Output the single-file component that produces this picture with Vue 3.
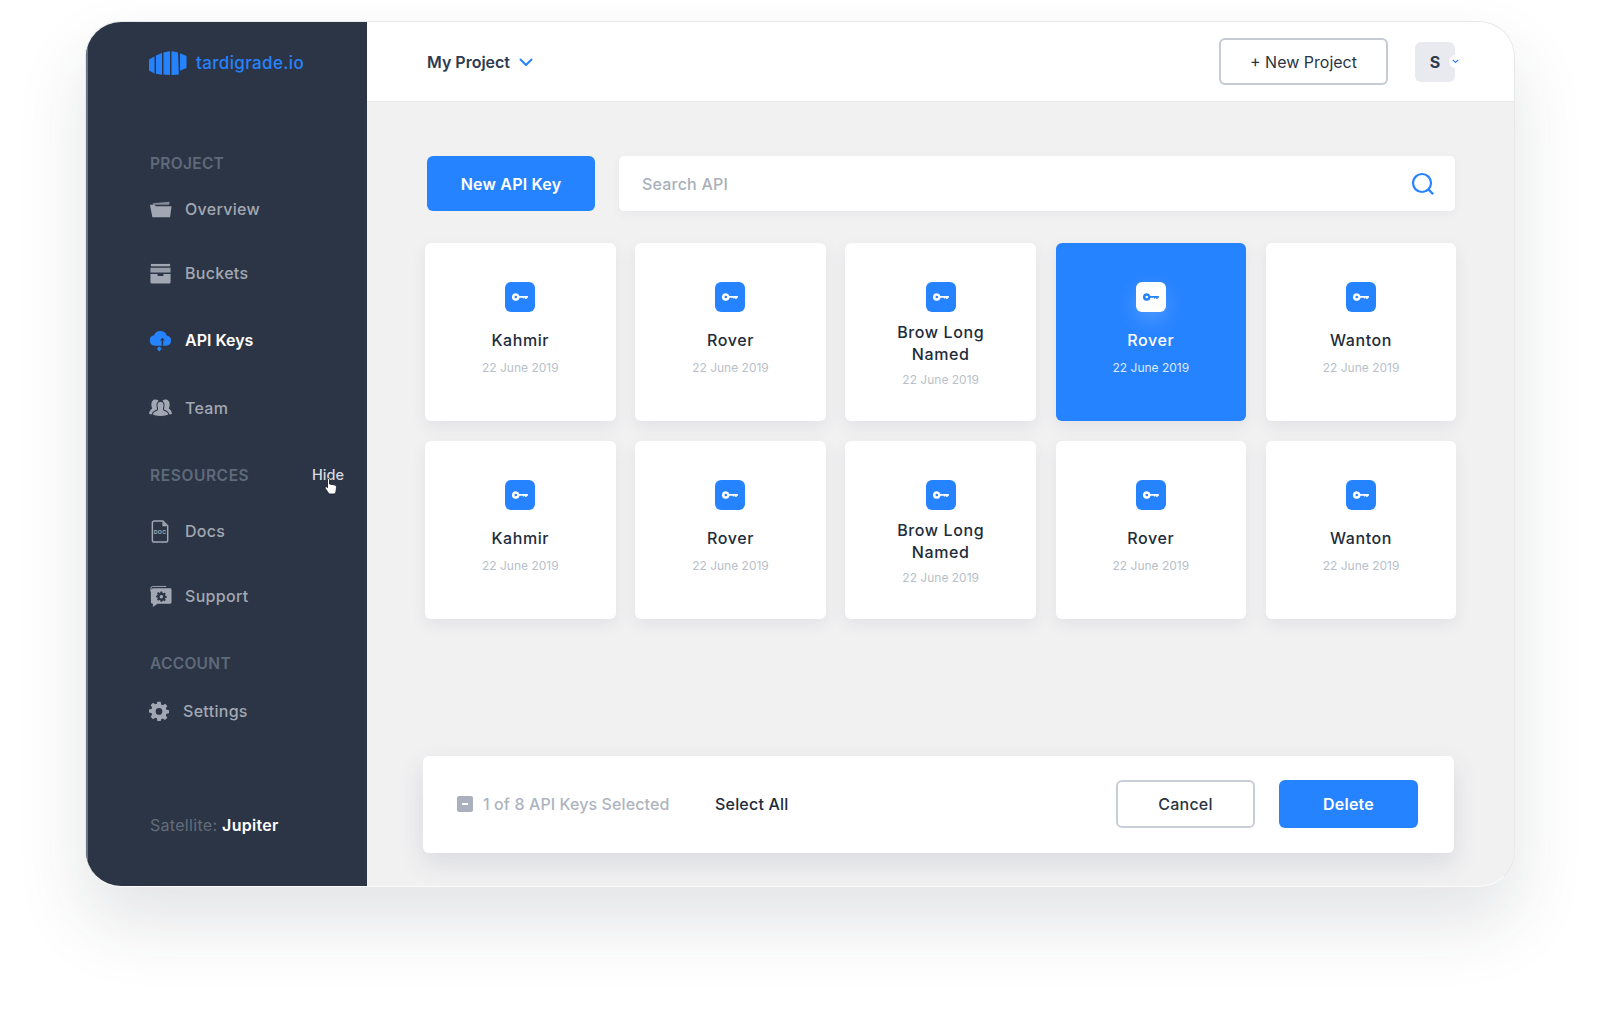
<template>
  <div class="page">
    <div class="window">
      <aside class="sidebar">
        <div class="logo">
          <svg class="logo-mark" width="38" height="24" viewBox="0 0 38 24">
            <path d="M0 8.500 5.500 5.500v17L0 19.500z" />
            <path d="M7 4.500 13 2v21.800L7 22.800z" />
            <path d="M14.500 1.500Q17.500.5 21 .3V24q-3.500-.1-6.500-.5z" />
            <path d="M22.500.3q3.500.2 6.500 1.200l.8 22q-3 .4-7.300.5z" />
            <path d="M31 2.300l6.500 2.700v12l-6.500 2.800z" />
          </svg>
          <span>tardigrade.io</span>
        </div>

        <div class="label first">PROJECT</div>
        <div v-for="item in projectItems" :key="item.name" class="item" :class="[item.cls, { active: item.active }]">
          <svg v-if="item.icon === 'folder'" class="icon" viewBox="0 0 24 24">
            <path d="M4 5.500 21.500 4 21 7H4z" opacity=".75" />
            <path d="M1 7h5l1 1.500h16.500L22 20H3.500z" />
          </svg>
          <svg v-else-if="item.icon === 'box'" class="icon" viewBox="0 0 24 24">
            <path d="M2 2h20v2.500H2z" />
            <path d="M1.500 6h21v5h-21z" opacity=".9" />
            <path d="M1.500 12.500h7.500v2h6v-2h7.500V21a1.500 1.500 0 0 1-1.500 1.500H3A1.500 1.500 0 0 1 1.500 21z" />
          </svg>
          <svg v-else-if="item.icon === 'cloud'" class="icon blue" viewBox="0 0 24 24">
            <path d="M6 17.500A5.500 5.500 0 0 1 5.300 6.600 7 7 0 0 1 18.500 6.800a5.400 5.400 0 0 1-.5 10.700z" />
            <path d="M9.500 18.500h2.500v1.700h1.700L10.750 23.500 7.800 20.200h1.700z" />
            <path d="M14 9 11.500 12h1.700v5.500h1.600V12h1.700z" fill="#2c3545" />
          </svg>
          <svg v-else class="icon" viewBox="0 0 24 24">
            <path d="M6.500 2.500a4.500 4.500 0 0 1 3.500 1.500C8.400 6 8.400 10 9.800 12.500c-2 .8-4.800 2-5.300 5.500H.8c-1.200 0-.8-3.800 2.500-6C1.500 8 2.500 2.500 6.500 2.500z" />
            <path d="M17.500 2.500a4.500 4.500 0 0 0-3.500 1.500c1.600 2 1.600 6 .2 8.500 2 .8 4.800 2 5.300 5.500h3.700c1.200 0 .8-3.800-2.500-6C22.500 8 21.500 2.500 17.500 2.500z" />
            <path d="M12 4.500c3.500 0 4.500 3.500 3.300 6.700-.5 1.300-.8 2 .5 2.600 2.200.8 4.700 1.900 4.700 4.200 0 1-3.500 2.500-8.500 2.500s-8.500-1.500-8.500-2.500c0-2.300 2.500-3.400 4.700-4.200 1.300-.6 1-1.300.5-2.600C7.500 8 8.500 4.500 12 4.500z" stroke="#2c3545" stroke-width="1.100" />
          </svg>
          <span>{{ item.name }}</span>
        </div>

        <div class="label resources">
          <span>RESOURCES</span>
          <span class="hide">Hide</span>
          <svg class="hand" width="14" height="17" viewBox="0 0 14 17">
            <path d="M3.500 1.500c0-1.300 2-1.300 2 0V6l4.500.8c1.500.3 2.500 1 2.500 2.500L12 13.500c-.2 1-.8 2-1.500 2.500H5L1.300 10.500C.5 9.300 1.800 8 3 9l.5.7z" fill="#fff" stroke="#1b2230" stroke-width=".9" />
          </svg>
        </div>
        <div v-for="item in resourceItems" :key="item.name" class="item" :class="item.cls">
          <svg v-if="item.icon === 'doc'" class="icon" viewBox="0 0 24 24">
            <path d="M5.500 1h9l5 5v15a2 2 0 0 1-2 2h-12a2 2 0 0 1-2-2V3a2 2 0 0 1 2-2z" fill="none" stroke="currentColor" stroke-width="1.500" />
            <path d="M14 1.500V6.500h5z" />
            <text x="11.500" y="15" text-anchor="middle" font-size="5.500" font-weight="700" font-family="Inter, sans-serif">DOC</text>
          </svg>
          <svg v-else class="icon" viewBox="0 0 24 24">
            <path d="M2 7V3.500A2 2 0 0 1 4 1.500h14" fill="none" stroke="currentColor" stroke-width="1" />
            <path d="M5 3.500h17a1.500 1.500 0 0 1 1.500 1.500v13a1.500 1.500 0 0 1-1.500 1.500H9l-5 3.500.2-3.500H3.500A1.500 1.500 0 0 1 2 18V6a2.500 2.500 0 0 1 3-2.500z" />
            <g transform="translate(7.400 6.400) scale(.46)" fill="#2c3545">
              <path fill-rule="evenodd" d="M10 1h4l.6 3.200 1.900.8 2.700-1.800 2.800 2.800-1.800 2.700.8 1.900L24 11.200v3.600l-3 .6-.8 1.900 1.800 2.700-2.800 2.800-2.700-1.800-1.900.8L14 24h-4l-.6-3.200-1.900-.8-2.700 1.800L2 19l1.800-2.700-.8-1.900L0 13.800v-3.600l3-.6.8-1.900L2 5l2.800-2.800 2.700 1.800 1.900-.8zM12 8.500a4 4 0 1 0 0 8 4 4 0 0 0 0-8z" />
            </g>
          </svg>
          <span>{{ item.name }}</span>
        </div>

        <div class="label account">ACCOUNT</div>
        <div class="item settings">
          <svg class="icon gear" viewBox="0 0 24 24">
            <path fill-rule="evenodd" d="M10 1h4l.6 3.200 1.900.8 2.700-1.800 2.800 2.800-1.800 2.700.8 1.900L24 11.200v3.600l-3 .6-.8 1.900 1.800 2.700-2.800 2.800-2.700-1.800-1.900.8L14 24h-4l-.6-3.200-1.900-.8-2.700 1.800L2 19l1.800-2.700-.8-1.900L0 13.800v-3.600l3-.6.8-1.900L2 5l2.800-2.800 2.700 1.800 1.900-.8zM12 8.500a4 4 0 1 0 0 8 4 4 0 0 0 0-8z" />
          </svg>
          <span>Settings</span>
        </div>

        <div class="satellite">Satellite: <b>Jupiter</b></div>
      </aside>

      <div class="main">
        <header class="topbar">
          <div class="project">
            <span>My Project</span>
            <svg width="14" height="9" viewBox="0 0 14 9">
              <path d="M1.500 1.500 7 7l5.500-5.500" fill="none" stroke="#2683ff" stroke-width="2" stroke-linecap="round" stroke-linejoin="round" />
            </svg>
          </div>
          <button class="new-project">+ New Project</button>
          <div class="avatar">
            S
            <span class="avatar-chevron">
              <svg width="7" height="5" viewBox="0 0 7 5">
                <path d="M.8.8 3.500 3.500 6.200.8" fill="none" stroke="#2683ff" stroke-width="1.100" />
              </svg>
            </span>
          </div>
        </header>

        <div class="content">
          <div class="toolbar">
            <button class="btn primary new-key">New API Key</button>
            <div class="search">
              <span>Search API</span>
              <svg width="24" height="24" viewBox="0 0 24 24">
                <circle cx="11" cy="11" r="9" fill="none" stroke="#2683ff" stroke-width="2.200" />
                <path d="M18 18l3.500 3.500" stroke="#2683ff" stroke-width="2.400" stroke-linecap="round" />
              </svg>
            </div>
          </div>

          <div class="grid">
            <div v-for="(key, i) in keys" :key="i" class="card" :class="{ selected: key.selected, tall: key.tall }">
              <div class="key-icon">
                <svg width="16" height="8" viewBox="0 0 16 8">
                  <path class="key-shape" fill-rule="evenodd" d="M3.800.2a3.800 3.800 0 0 1 3.600 2.700h8a.6.600 0 0 1 .6.600v1.300h-1.300V6h-1.500V4.800h-.8V5.600h-1.500V4.800H7.500A3.800 3.800 0 1 1 3.800.2zm0 2.500a1.300 1.300 0 1 0 0 2.600 1.300 1.300 0 0 0 0-2.600z" />
                </svg>
              </div>
              <div class="key-name">{{ key.name }}</div>
              <div class="key-date">22 June 2019</div>
            </div>
          </div>

          <div class="selection-bar">
            <span class="checkbox"></span>
            <span class="count">1 of 8 API Keys Selected</span>
            <span class="select-all">Select All</span>
            <button class="btn outline">Cancel</button>
            <button class="btn primary">Delete</button>
          </div>
        </div>
      </div>
    </div>
  </div>
</template>

<script setup>
const projectItems = [
  { name: 'Overview', icon: 'folder', cls: 'overview' },
  { name: 'Buckets', icon: 'box', cls: 'buckets' },
  { name: 'API Keys', icon: 'cloud', cls: 'apikeys', active: true },
  { name: 'Team', icon: 'team', cls: 'team' },
]

const resourceItems = [
  { name: 'Docs', icon: 'doc', cls: 'docs' },
  { name: 'Support', icon: 'support', cls: 'support' },
]

const keys = [
  { name: 'Kahmir' },
  { name: 'Rover' },
  { name: 'Brow Long Named', tall: true },
  { name: 'Rover', selected: true },
  { name: 'Wanton' },
  { name: 'Kahmir' },
  { name: 'Rover' },
  { name: 'Brow Long Named', tall: true },
  { name: 'Rover' },
  { name: 'Wanton' },
]
</script>

<style scoped>
.page {
  height: 1011px;
  padding: 21px 0 0 85px;
  box-sizing: border-box;
  background: #fff;
  overflow: hidden;
  font-family: Inter, "Liberation Sans", sans-serif;
}

.window {
  display: flex;
  width: 1430px;
  height: 866px;
  box-sizing: border-box;
  border: 1px solid #e6e8ea;
  border-bottom-color: #fbfbfb;
  border-radius: 36px;
  overflow: hidden;
  background: #f1f1f2;
  box-shadow: 0 36px 70px rgba(40, 48, 60, 0.13);
}

.sidebar {
  display: flex;
  flex-direction: column;
  flex: none;
  width: 281px;
  box-sizing: border-box;
  padding-left: 62px;
  padding-right: 23px;
  border-left: 2px solid #66758a;
  background: #2c3545;
}

.logo {
  display: flex;
  align-items: center;
  gap: 9px;
  height: 80px;
  box-sizing: border-box;
  padding-top: 2px;
  color: #2683ff;
  font-size: 17px;
  font-weight: 500;
  letter-spacing: 0.35px;
}

.logo-mark {
  margin-left: -1px;
  fill: #2683ff;
}

.label {
  height: 18px;
  color: #5f6a7a;
  font-size: 15.500px;
  font-weight: 600;
  line-height: 18px;
  letter-spacing: 0.3px;
}

.label.first {
  margin-top: 53px;
}

.label.resources {
  position: relative;
  display: flex;
  justify-content: space-between;
  margin-top: 47px;
  letter-spacing: 0.6px;
}

.label.account {
  margin-top: 47px;
}

.hide {
  margin-top: -1px;
  color: #d8dce2;
  font-size: 14.500px;
  font-weight: 500;
  letter-spacing: 0;
}

.hand {
  position: absolute;
  top: 11px;
  right: 6px;
}

.item {
  display: flex;
  align-items: center;
  height: 24px;
  color: #a2a8b3;
  font-size: 16px;
  font-weight: 500;
  letter-spacing: 0.3px;
}

.item.active {
  color: #fff;
  font-weight: 600;
  letter-spacing: 0;
}

.overview { margin-top: 24px; }
.buckets { margin-top: 40px; }
.apikeys { margin-top: 43px; }
.team { margin-top: 44px; }
.docs { margin-top: 34px; }
.support { margin-top: 41px; }
.settings { margin-top: 26px; }

.icon {
  flex: none;
  width: 23px;
  height: 23px;
  margin-right: 13px;
  margin-left: -1px;
  fill: currentColor;
}

.icon.blue {
  color: #2683ff;
}

.icon.gear {
  width: 20px;
  height: 20px;
  margin-right: 14px;
}

.satellite {
  margin-top: auto;
  padding-bottom: 52px;
  color: #626c7a;
  font-size: 16px;
  line-height: 18px;
  letter-spacing: 0.3px;
}

.satellite b {
  color: #fff;
  font-weight: 600;
}

.main {
  display: flex;
  flex-direction: column;
  flex: 1;
  min-width: 0;
}

.topbar {
  display: flex;
  align-items: center;
  flex: none;
  height: 80px;
  box-sizing: border-box;
  padding: 0 60px;
  border-bottom: 1px solid #e8e9eb;
  background: #fff;
}

.project {
  display: flex;
  align-items: center;
  gap: 9px;
  margin-right: auto;
  padding-top: 1px;
  color: #2f3b4e;
  font-size: 16px;
  font-weight: 600;
}

.new-project {
  width: 169px;
  height: 47px;
  margin-right: 27px;
  border: 2px solid #c5cad3;
  border-radius: 6px;
  background: #fff;
  color: #2b3543;
  font-family: Inter, sans-serif;
  font-size: 16px;
  font-weight: 400;
}

.avatar {
  position: relative;
  display: flex;
  align-items: center;
  justify-content: center;
  width: 40px;
  height: 40px;
  margin-right: -1px;
  border-radius: 6px;
  background: #e8eaf0;
  color: #2f3b4e;
  font-size: 16px;
  font-weight: 700;
}

.avatar-chevron {
  position: absolute;
  top: 13px;
  right: -7px;
  display: flex;
  align-items: center;
  justify-content: center;
  width: 13px;
  height: 13px;
  border-radius: 50%;
  background: #fff;
}

.content {
  display: flex;
  flex-direction: column;
  flex: 1;
  padding: 54px 57px 33px;
}

.toolbar {
  display: flex;
  gap: 24px;
  height: 55px;
  margin: 0 2px 32px 3px;
  flex: none;
}

.btn {
  border: 0;
  border-radius: 6px;
  font-family: Inter, sans-serif;
  font-size: 16px;
  font-weight: 600;
  letter-spacing: 0.2px;
}

.btn.primary {
  background: #2683ff;
  color: #fff;
}

.btn.new-key {
  flex: none;
  width: 168px;
}

.search {
  display: flex;
  flex: 1;
  align-items: center;
  justify-content: space-between;
  padding: 0 20px 0 23px;
  border-radius: 5px;
  background: #fff;
  color: #a9afba;
  font-size: 16px;
  font-weight: 500;
  letter-spacing: 0.2px;
  box-shadow: 0 3px 10px rgba(60, 70, 90, 0.05);
}

.grid {
  display: grid;
  grid-template-columns: repeat(5, 190.600px);
  grid-auto-rows: 178px;
  gap: 20px 19.600px;
  margin-left: 1px;
}

.card {
  display: flex;
  flex-direction: column;
  align-items: center;
  padding-top: 39px;
  box-sizing: border-box;
  border-radius: 6px;
  background: #fff;
  box-shadow: 0 6px 16px rgba(60, 70, 90, 0.08);
}

.key-icon {
  display: flex;
  align-items: center;
  justify-content: center;
  width: 30px;
  height: 30px;
  border-radius: 6px;
  background: #2683ff;
}

.key-shape {
  fill: #fff;
}

.key-name {
  width: 140px;
  margin-top: 17px;
  color: #212c3b;
  font-size: 16px;
  font-weight: 500;
  line-height: 22px;
  letter-spacing: 0.6px;
  text-align: center;
}

.key-date {
  margin-top: 9px;
  color: #b9bfca;
  font-size: 12px;
  line-height: 16px;
}

.card.tall .key-name {
  margin-top: 9px;
}

.card.tall .key-date {
  margin-top: 7px;
}

.card.selected {
  background: #2683ff;
}

.card.selected .key-icon {
  background: #fff;
  box-shadow: 0 8px 20px rgba(255, 255, 255, 0.2);
}

.card.selected .key-shape {
  fill: #2683ff;
}

.card.selected .key-name {
  color: #fff;
}

.card.selected .key-date {
  color: #dde9ff;
}

.selection-bar {
  display: flex;
  align-items: center;
  height: 97px;
  box-sizing: border-box;
  margin: auto 3px 0 -1px;
  padding: 0 36px 2px 34px;
  border-radius: 6px;
  background: #fff;
  box-shadow: 0 10px 26px rgba(60, 70, 90, 0.13);
}

.checkbox {
  position: relative;
  flex: none;
  width: 16px;
  height: 16px;
  margin-right: 10px;
  border-radius: 2px;
  background: #aab0bd;
}

.checkbox::after {
  content: "";
  position: absolute;
  top: 7px;
  left: 5px;
  width: 6px;
  height: 2px;
  background: #fff;
}

.count {
  width: 217px;
  margin-right: 15px;
  color: #aeb4c0;
  font-size: 16px;
  font-weight: 500;
  letter-spacing: 0.1px;
  white-space: nowrap;
}

.select-all {
  margin-right: auto;
  color: #212c3b;
  font-size: 16px;
  font-weight: 500;
  letter-spacing: 0.2px;
}

.selection-bar .btn {
  width: 139px;
  height: 48px;
}

.btn.outline {
  margin-right: 24px;
  border: 2px solid #c9cdd5;
  background: #fff;
  color: #2b3543;
  font-weight: 500;
}
</style>
